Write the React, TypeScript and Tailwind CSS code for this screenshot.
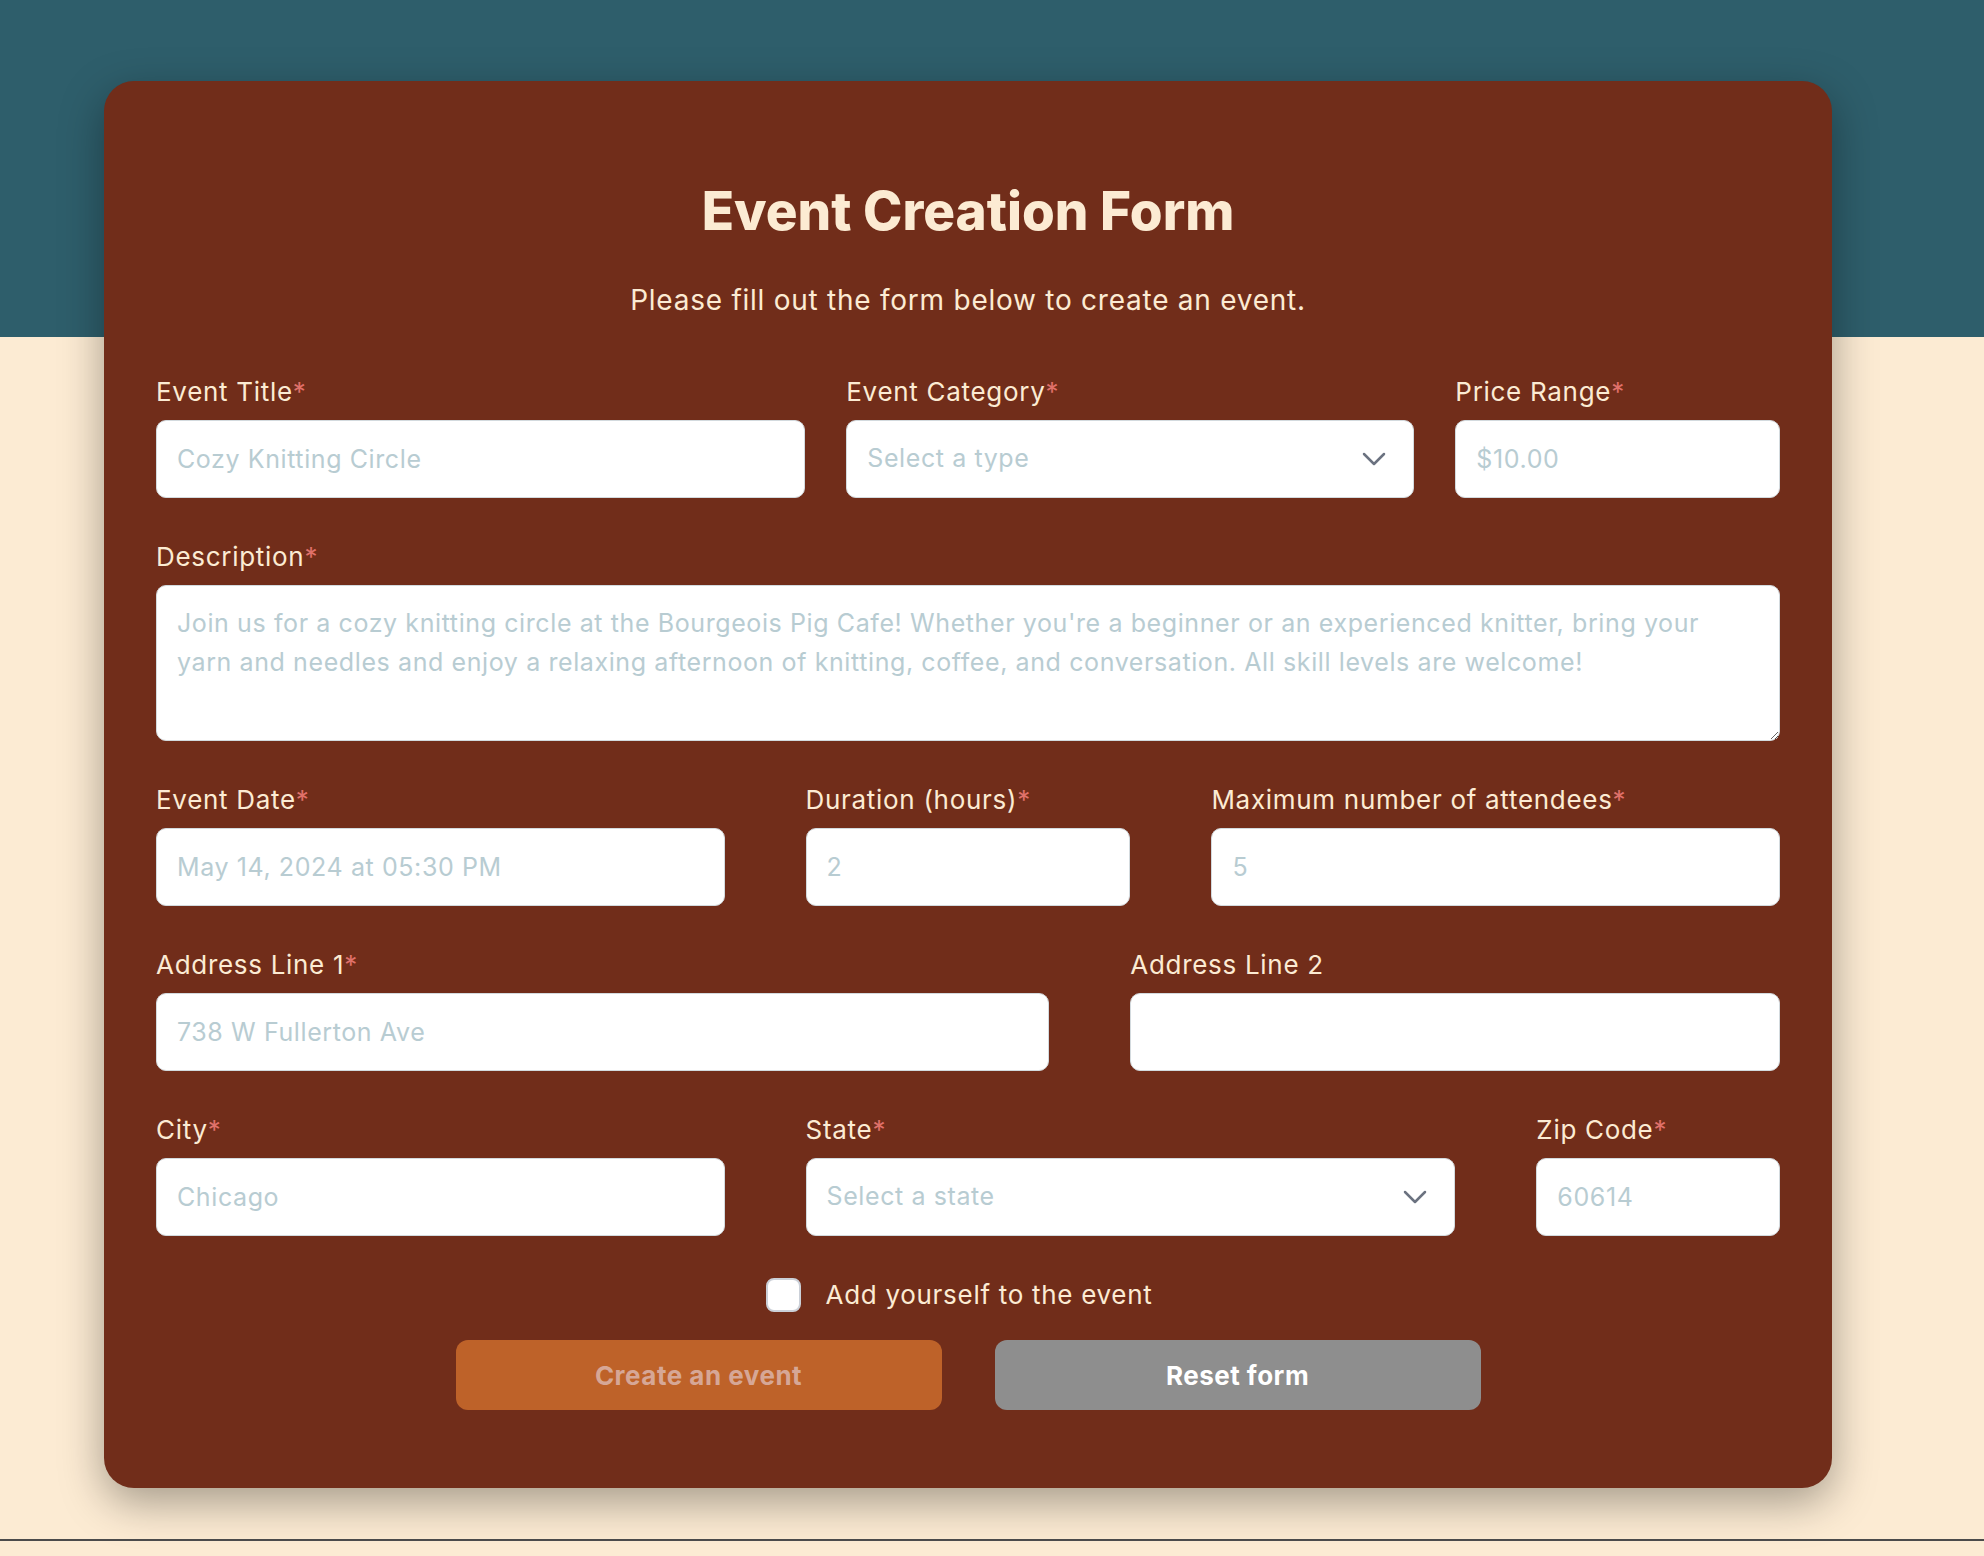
import { ReactNode } from "react";

const inputCls =
  "h-[78px] w-full min-w-0 rounded-[10px] border border-[#d3dade] bg-white px-5 text-[25px] tracking-[0.6px] text-[#3b3b3b] outline-none placeholder:text-[#b8ccd2]";

function Field({
  label,
  required = true,
  children,
}: {
  label: string;
  required?: boolean;
  children: ReactNode;
}) {
  return (
    <div className="flex min-w-0 flex-col gap-[12px]">
      <label className="text-[26px] leading-[32px] tracking-[0.7px] text-[#fcebd3]">
        {label}
        {required && <span className="text-[#e0716a]">*</span>}
      </label>
      {children}
    </div>
  );
}

function Chevron() {
  return (
    <svg
      className="pointer-events-none absolute right-[28px] top-1/2 h-[14px] w-[24px] -translate-y-1/2"
      viewBox="0 0 24 14"
      fill="none"
      stroke="#6b7280"
      strokeWidth="2.5"
      strokeLinecap="round"
      strokeLinejoin="round"
    >
      <path d="M2 2l10 10L22 2" />
    </svg>
  );
}

function SelectBox({ placeholder }: { placeholder: string }) {
  return (
    <div className="relative">
      <select
        defaultValue=""
        className="h-[78px] w-full appearance-none rounded-[10px] border border-[#d3dade] bg-white px-5 text-[25px] tracking-[0.6px] text-[#b8ccd2] outline-none"
      >
        <option value="" disabled>
          {placeholder}
        </option>
      </select>
      <Chevron />
    </div>
  );
}

export default function App() {
  return (
    <div className="min-h-[1556px] bg-[linear-gradient(to_bottom,#2e5e6b_337px,#fcebd3_337px)] pt-[81px] font-[Inter,sans-serif]">
      <div className="ml-[104px] w-[1728px] rounded-[30px] bg-[#712d1a] px-[52px] pb-[78px] pt-[99px] shadow-[0_14px_44px_rgba(0,0,0,0.35)]">
        <h1 className="text-center text-[53px] font-extrabold leading-[62px] text-[#fcebd3]">
          Event Creation Form
        </h1>
        <p className="mt-[40px] text-center text-[28px] leading-[36px] tracking-[0.75px] text-[#fcebd3]">
          Please fill out the form below to create an event.
        </p>

        <div className="mt-[58px] grid grid-cols-[minmax(0,8fr)_minmax(0,7fr)_minmax(0,4fr)] gap-x-[41px]">
          <Field label="Event Title">
            <input className={inputCls} placeholder="Cozy Knitting Circle" />
          </Field>
          <Field label="Event Category">
            <SelectBox placeholder="Select a type" />
          </Field>
          <Field label="Price Range">
            <input className={inputCls} placeholder="$10.00" />
          </Field>
        </div>

        <div className="mt-[43px]">
          <Field label="Description">
            <textarea
              className="h-[156px] w-full rounded-[10px] border border-[#d3dade] bg-white px-5 pt-[18px] text-[25px] leading-[39px] tracking-[0.6px] text-[#3b3b3b] outline-none placeholder:text-[#b8ccd2]"
              placeholder={
                "Join us for a cozy knitting circle at the Bourgeois Pig Cafe! Whether you're a beginner or an experienced knitter, bring your\nyarn and needles and enjoy a relaxing afternoon of knitting, coffee, and conversation. All skill levels are welcome!"
              }
            />
          </Field>
        </div>

        <div className="mt-[43px] grid grid-cols-[minmax(0,7fr)_minmax(0,4fr)_minmax(0,7fr)] gap-x-[81px]">
          <Field label="Event Date">
            <input className={inputCls} placeholder="May 14, 2024 at 05:30 PM" />
          </Field>
          <Field label="Duration (hours)">
            <input className={inputCls} placeholder="2" />
          </Field>
          <Field label="Maximum number of attendees">
            <input className={inputCls} placeholder="5" />
          </Field>
        </div>

        <div className="mt-[43px] grid grid-cols-[minmax(0,11fr)_minmax(0,8fr)] gap-x-[81px]">
          <Field label="Address Line 1">
            <input className={inputCls} placeholder="738 W Fullerton Ave" />
          </Field>
          <Field label="Address Line 2" required={false}>
            <input className={inputCls} />
          </Field>
        </div>

        <div className="mt-[43px] grid grid-cols-[minmax(0,7fr)_minmax(0,8fr)_minmax(0,3fr)] gap-x-[81px]">
          <Field label="City">
            <input className={inputCls} placeholder="Chicago" />
          </Field>
          <Field label="State">
            <SelectBox placeholder="Select a state" />
          </Field>
          <Field label="Zip Code">
            <input className={inputCls} placeholder="60614" />
          </Field>
        </div>

        <div className="mt-[42px] flex items-center justify-center gap-[25px] pr-[18px]">
          <input
            type="checkbox"
            className="h-[34px] w-[35px] appearance-none rounded-[8px] border-2 border-[#cbd0d8] bg-white"
          />
          <span className="text-[26px] leading-[32px] tracking-[0.7px] text-[#fcebd3]">
            Add yourself to the event
          </span>
        </div>

        <div className="mt-[28px] flex justify-center gap-[53px]">
          <button className="h-[70px] w-[486px] rounded-[12px] bg-[#be6229] text-[26px] font-bold tracking-[0.5px] text-[#d6a796]">
            Create an event
          </button>
          <button className="h-[70px] w-[486px] rounded-[12px] bg-[#8e8e8e] text-[26px] font-bold tracking-[0.5px] text-white">
            Reset form
          </button>
        </div>
      </div>
      <div className="mt-[51px] h-[2px] bg-[#4b4b4b]" />
    </div>
  );
}
